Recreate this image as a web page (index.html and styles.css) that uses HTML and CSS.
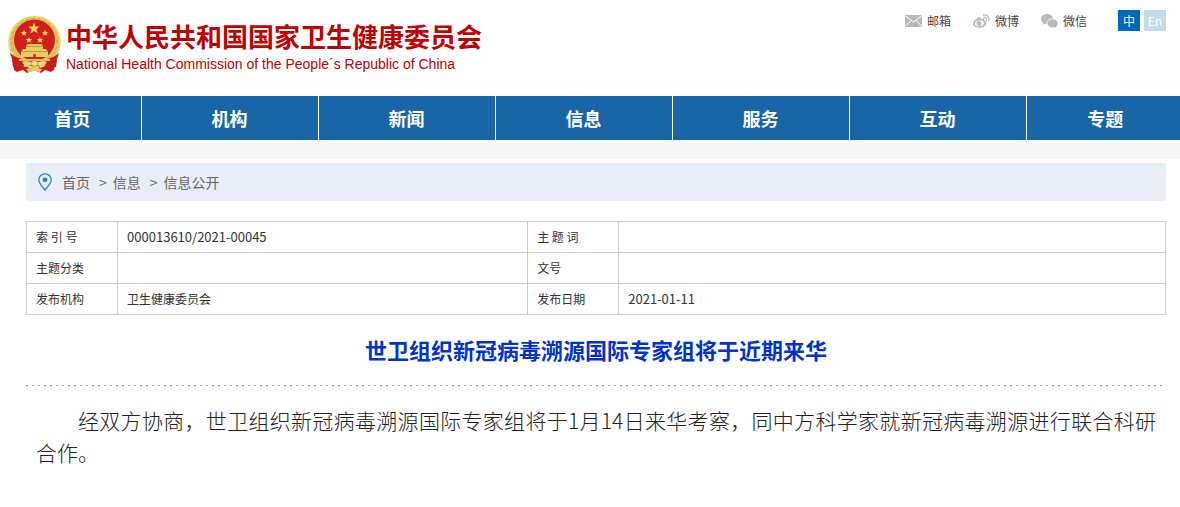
FILE: index.html
```html
<!DOCTYPE html>
<html lang="zh-CN">

<head>
    <meta charset="UTF-8">
    <meta name="viewport" content="width=device-width, initial-scale=1.0">
    <title>世卫组织新冠病毒溯源国际专家组将于近期来华</title>
    <link rel="stylesheet" href="styles.css">
</head>

<body>
    <header class="header">
        <a class="logo" href="#">
            <svg class="emblem" viewBox="0 0 55 59" aria-hidden="true">
                <!-- ribbons -->
                <path d="M6 40l10 6h23l10-6-2 15-3 2-6-2-4 3-7-3-7 3-4-3-6 2-3-2z" fill="#c81d1a"/>
                <!-- wheat ring -->
                <circle cx="27.500" cy="27" r="26" fill="#dcc45c"/>
                <circle cx="27.500" cy="27" r="25.500" fill="none" stroke="#eedd8c" stroke-width="2" stroke-dasharray="4 2"/>
                <circle cx="27.500" cy="26" r="22.500" fill="none" stroke="#c6a63e" stroke-width="1" stroke-dasharray="3 3"/>
                <circle cx="27.500" cy="25" r="20.500" fill="#d01f1e"/>
                <!-- stars -->
                <path d="M27 7.500l1.500 4h4.300l-3.400 2.700 1.300 4.300-3.700-2.500-3.700 2.500 1.300-4.300-3.400-2.700h4.300z" fill="#f0d75a"/>
                <g fill="#f0d75a">
                    <path id="star" d="M17 15l.9 2h2.300l-1.800 1.500.7 2.300-2.100-1.300-2.100 1.300.7-2.300-1.800-1.500h2.300z"/>
                    <use href="#star" x="21"/>
                    <use href="#star" x="5" y="7"/>
                    <use href="#star" x="16" y="7"/>
                </g>
                <!-- gate -->
                <path d="M19 31l2-2h13l2 2v3h3l2 3v5H14v-5l2-3h3z" fill="#e8cc62"/>
                <path d="M19 31.500h17M15 36.500h25" stroke="#c39a35" stroke-width="1"/>
                <path d="M26 39h3v3h-3z" fill="#b8541f"/>
                <!-- gear and knot -->
                <path d="M3 38c7 6 14 7 24.500 7S45 44 52 38l-3 9-7 6-6-4-8.500 3-8.500-3-6 4-7-6z" fill="#c81d1a"/>
                <path d="M12 44h31v2H12z" fill="#dcc25c"/>
                <path d="M5 45l9 6-1 4-7-3zM50 45l-9 6 1 4 7-3z" fill="#c81d1a"/>
                <path d="M15 47c5-2 7 0 9 0l3.500-2 3.500 2c2 0 4-2 9 0l-3 4-6-1-3.500 3-3.500-3-6 1z" fill="#ead374"/>
                <circle cx="27.500" cy="48.500" r="3" fill="#f0df91" stroke="#c19d3a" stroke-width="1"/>
                <path d="M19 54l8-2 8 2-2 3-6-1-6 1z" fill="#e0c765"/>
            </svg>
            <span class="logo-text">
                <strong class="name">中华人民共和国国家卫生健康委员会</strong>
                <span class="name-en" lang="en">National Health Commission of the People´s Republic of China</span>
            </span>
        </a>
        <div class="tools">
            <a class="tool" href="#">
                <svg class="tool-icon" viewBox="0 0 17 14" aria-hidden="true">
                    <path d="M0 1h17v12H0z" fill="#b9b9b9"/>
                    <path d="M0 1.500l8.500 6.500L17 1.500M0 12.500l6-6M17 12.500l-6-6" fill="none" stroke="#fff" stroke-width="1"/>
                </svg>
                邮箱
            </a>
            <a class="tool" href="#">
                <svg class="tool-icon" viewBox="0 0 17 14" aria-hidden="true">
                    <path d="M6 3.200c1.200-.4 2 .2 1.700 1.600 2-.8 4-.5 3.600 1.400 1.700.5 2.400 1.600 1.900 3.200C12.600 12 9.500 13.700 6.300 13.700 3 13.700 0 12.200 0 9.600 0 7.200 3.600 3.800 6 3.200z" fill="#b9b9b9"/>
                    <ellipse cx="6.300" cy="9.400" rx="4.500" ry="3" fill="#fff" transform="rotate(-8 6.300 9.400)"/>
                    <circle cx="6" cy="9.500" r="2.500" fill="#b9b9b9"/>
                    <circle cx="5.300" cy="10" r=".6" fill="#fff"/>
                    <path d="M10.500 1c3.400-.8 6.300 2 5.200 5.500M10.800 3.500c1.600-.3 2.900.9 2.500 2.600" fill="none" stroke="#b9b9b9" stroke-width="1.300" stroke-linecap="round"/>
                </svg>
                微博
            </a>
            <a class="tool" href="#">
                <svg class="tool-icon" viewBox="0 0 17 14" aria-hidden="true">
                    <path d="M6 0c3.300 0 5.800 1.900 6 4.500-3.700-.2-6.500 2-6.300 5.200L4 9.500 1.800 10.800l.5-2C.8 7.900 0 6.500 0 5 0 2.200 2.700 0 6 0z" fill="#b9b9b9"/>
                    <path d="M11.600 5.200c3 0 5.200 1.800 5.200 4.100 0 1.300-.7 2.300-1.700 3.100l.4 1.500-1.800-.9c-4 1-7.300-1-7.300-3.700 0-2.300 2.300-4.100 5.200-4.100z" fill="#b9b9b9"/>
                    <g fill="#ddd">
                        <circle cx="4" cy="3.500" r=".6"/>
                        <circle cx="8" cy="3.500" r=".6"/>
                        <circle cx="10" cy="8.200" r=".6"/>
                        <circle cx="13.300" cy="8.200" r=".6"/>
                    </g>
                </svg>
                微信
            </a>
            <div class="langs">
                <a class="lang active" href="#">中</a>
                <a class="lang" href="#" lang="en">En</a>
            </div>
        </div>
    </header>

    <nav class="nav">
        <a href="#">首页</a>
        <a href="#">机构</a>
        <a href="#">新闻</a>
        <a href="#">信息</a>
        <a href="#">服务</a>
        <a href="#">互动</a>
        <a href="#">专题</a>
    </nav>
    <div class="strip"></div>

    <main class="content">
        <div class="crumbs">
            <svg class="pin" viewBox="0 0 14 18" aria-hidden="true">
                <path d="M7 .8c3.500 0 6.200 2.700 6.200 6.100C13.200 10.500 9 14 7 17.200 5 14 .8 10.500 .8 6.900.8 3.500 3.500.8 7 .8z" fill="none" stroke="#2583d5" stroke-width="1.300"/>
                <circle cx="7" cy="6.800" r="2.400" fill="#2583d5"/>
            </svg>
            <a href="#">首页</a>
            <span class="sep">&gt;</span>
            <a href="#">信息</a>
            <span class="sep">&gt;</span>
            <a href="#">信息公开</a>
        </div>

        <table class="info">
            <tr>
                <th scope="row" class="label">索 引 号</th>
                <td class="wide num">000013610/2021-00045</td>
                <th scope="row" class="label">主 题 词</th>
                <td></td>
            </tr>
            <tr>
                <th scope="row">主题分类</th>
                <td></td>
                <th scope="row">文号</th>
                <td></td>
            </tr>
            <tr>
                <th scope="row">发布机构</th>
                <td>卫生健康委员会</td>
                <th scope="row">发布日期</th>
                <td class="num">2021-01-11</td>
            </tr>
        </table>

        <h1 class="title">世卫组织新冠病毒溯源国际专家组将于近期来华</h1>
        <div class="article">
            <p>经双方协商，世卫组织新冠病毒溯源国际专家组将于1月14日来华考察，同中方科学家就新冠病毒溯源进行联合科研合作。</p>
        </div>
    </main>
</body>

</html>
```

FILE: styles.css
```css
* {
    margin: 0;
    padding: 0;
    box-sizing: border-box;
}

body {
    background-color: #fff;
    font-family: "Noto Sans CJK SC", sans-serif;
    font-size: 12px;
    color: #333;
}

a {
    color: inherit;
    text-decoration: none;
}

.header {
    display: flex;
    justify-content: space-between;
    align-items: flex-start;
    min-height: 96px;
    padding: 10px 14px 0 7px;
}

.logo {
    display: flex;
    gap: 4px;
    padding-top: 5px;
    color: #be0000;
}

.emblem {
    width: 55px;
    height: 59px;
}

.logo-text {
    display: flex;
    flex-direction: column;
    padding-top: 4px;
}

.name {
    font-size: 26px;
    line-height: 34px;
}

.name-en {
    font-family: "Liberation Sans", Arial, sans-serif;
    font-size: 14px;
    line-height: 22px;
}

.tools {
    display: flex;
    align-items: center;
    gap: 22px;
    color: #444;
}

.tool {
    display: flex;
    align-items: center;
    gap: 5px;
    line-height: 21px;
}

.tool-icon {
    width: 17px;
    height: 14px;
}

.langs {
    display: flex;
    gap: 4px;
    margin-left: 9px;
}

.lang {
    width: 22px;
    line-height: 21px;
    text-align: center;
    color: #fff;
    background-color: #c3daea;
}

.lang.active {
    background-color: #0068b7;
}

.nav {
    display: flex;
    background-color: #1966a7;
}

.nav a {
    width: 15%;
    line-height: 44px;
    text-align: center;
    font-size: 18px;
    font-weight: bold;
    color: #fff;
    border-right: 1px solid #fff;
}

.nav a:first-child {
    width: 12%;
    padding-left: 4px;
}

.nav a:last-child {
    width: 13%;
    padding-left: 4px;
    border-right: none;
}

.strip {
    height: 19px;
    background-color: #f6f6f6;
}

.content {
    padding: 4px 14px 32px 26px;
}

.crumbs {
    display: flex;
    align-items: center;
    height: 38px;
    padding-left: 12px;
    margin-bottom: 20px;
    font-size: 14px;
    color: #666;
    background-color: #e9edf5;
}

.pin {
    width: 14px;
    height: 18px;
    margin-right: 10px;
}

.sep {
    margin: 0 6px 0 9px;
}

.info {
    width: 100%;
    table-layout: fixed;
    border-collapse: collapse;
}

.info th,
.info td {
    height: 31px;
    padding: 0 9px;
    text-align: left;
    font-weight: normal;
    line-height: 18px;
    border: 1px solid #ccc;
}

.info .label {
    width: 8%;
}

.info .wide {
    width: 36%;
}

.info .num {
    font-size: 13px;
}

.title {
    padding-bottom: 2px;
    line-height: 69px;
    text-align: center;
    font-size: 22px;
    color: #03c;
    background: repeating-linear-gradient(90deg, #999 0 2px, transparent 2px 6px) bottom / 100% 1px no-repeat;
}

.article {
    padding: 18px 10px;
    font-size: 21px;
    font-weight: 300;
    line-height: 32px;
    text-align: justify;
    color: #222;
}

.article p {
    text-indent: 2em;
}
```
